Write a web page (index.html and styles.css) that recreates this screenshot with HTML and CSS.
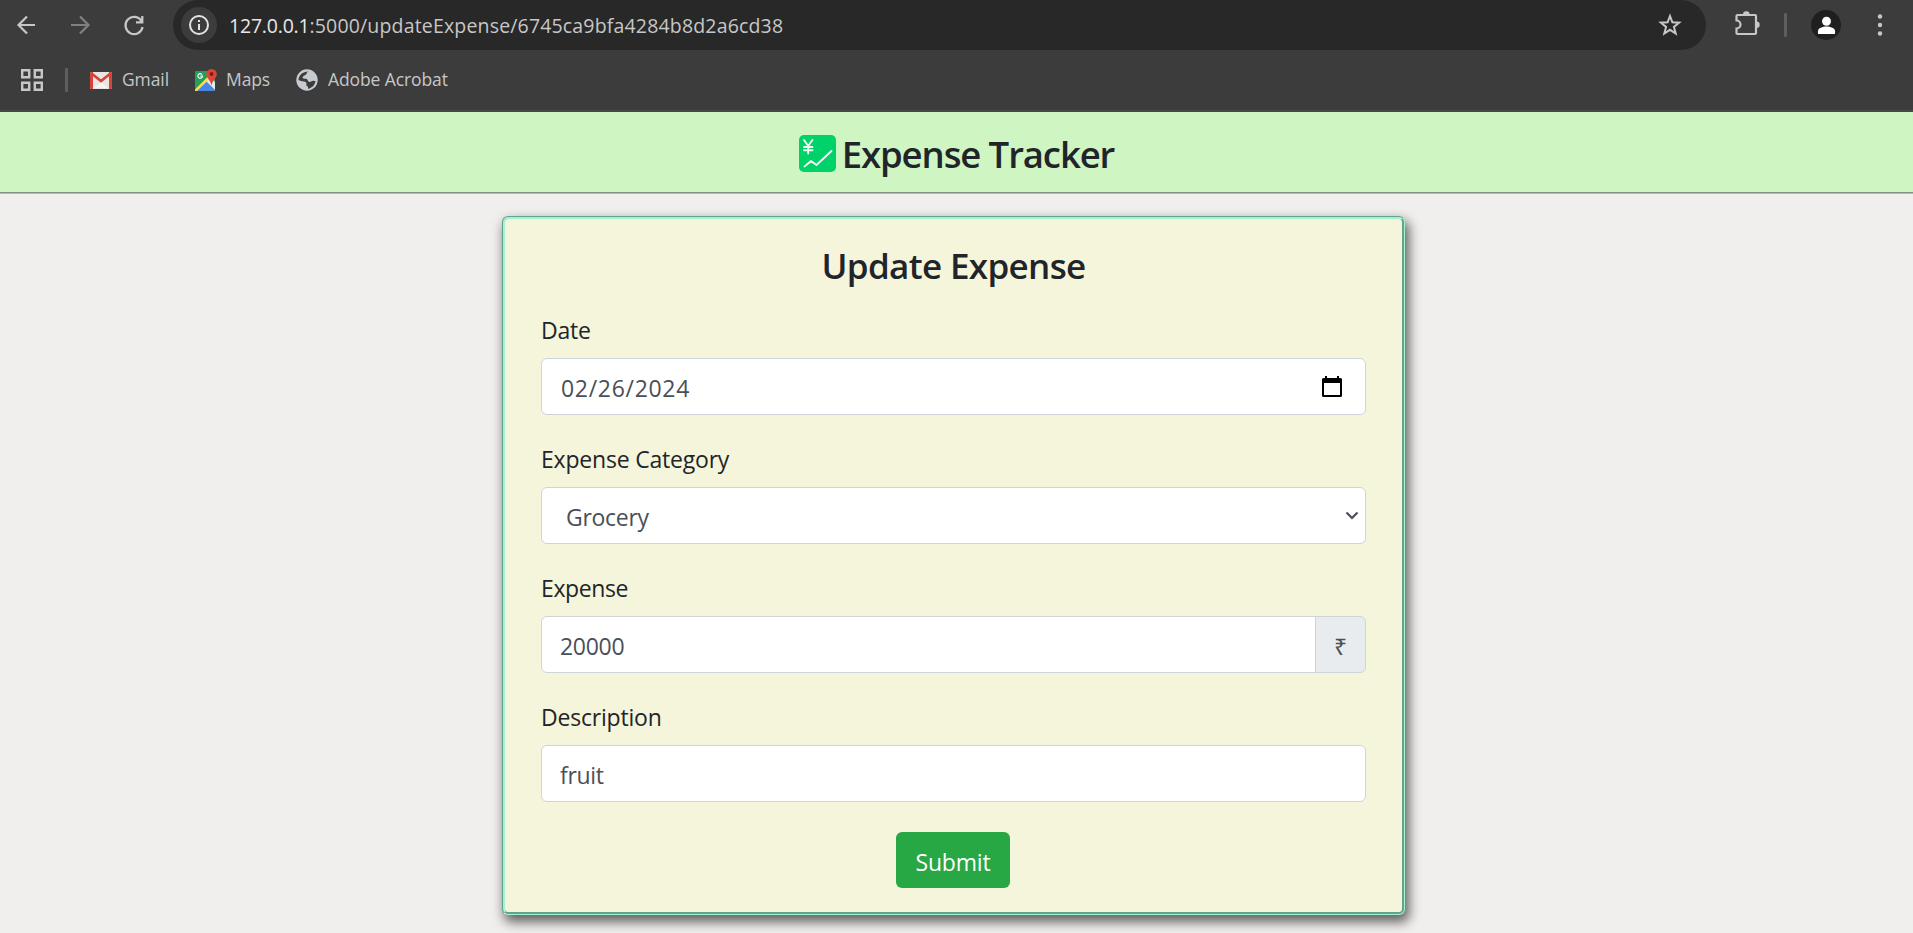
FILE: index.html
```html
<!DOCTYPE html>
<html lang="en">
<head>
<meta charset="utf-8">
<title>Expense Tracker</title>
<link rel="stylesheet" href="styles.css">
</head>
<body>
<div class="toolbar">
  <div class="nav-row">
    <svg class="nav-ico back" viewBox="0 0 24 24"><path d="M20 12H4M12 3.500L3.500 12l8.500 8.500"/></svg>
    <svg class="nav-ico forward" viewBox="0 0 24 24"><path d="M3 12H20M12 3.500L20.500 12L12 20.500"/></svg>
    <svg class="nav-ico reload" viewBox="0 0 24 24"><path d="M19.500 8A8.600 8.600 0 1 0 20.600 14M20.300 3v6.300H14"/></svg>
    <div class="omnibox">
      <span class="info"><svg viewBox="0 0 22 22"><circle cx="11" cy="11" r="9"/><path d="M11 10v6M11 6v2"/></svg></span>
      <span class="url"><b>127.0.0.1</b>:5000/updateExpense/6745ca9bfa4284b8d2a6cd38</span>
      <svg class="star" viewBox="0 0 24 24"><path d="M12 3l2.400 6.300 6.700.4-5.200 4.200 1.800 6.600L12 16.800l-5.700 3.700 1.800-6.600-5.200-4.200 6.700-.4z"/></svg>
    </div>
    <svg class="puzzle" viewBox="0 0 26 26"><path d="M3.500 4H21a1 1 0 0 1 1 1V22a1 1 0 0 1-1 1H3.500a1 1 0 0 1-1-1V17.500a4 4 0 0 0 0-8V5a1 1 0 0 1 1-1z"/><path class="knob" d="M9 3.500a3.300 3.300 0 0 1 6.600 0zM22.500 10.500a3.200 3.200 0 0 1 0 6.400z"/></svg>
    <span class="sep sep-top"></span>
    <span class="avatar"><svg viewBox="0 0 20 20"><circle cx="10" cy="5.500" r="4.700"/><path d="M1 19v-3c0-3.500 5-5 9-5s9 1.500 9 5v3z"/></svg></span>
    <svg class="dots" viewBox="0 0 6 22"><circle cx="3" cy="2.500" r="2.200"/><circle cx="3" cy="11" r="2.200"/><circle cx="3" cy="19.500" r="2.200"/></svg>
  </div>
  <div class="bookmarks">
    <svg class="apps" viewBox="0 0 22 22"><path d="M1.200 1.200h7v7h-7zM13.800 1.200h7v7h-7zM1.200 13.800h7v7h-7zM13.800 13.800h7v7h-7z"/></svg>
    <span class="sep sep-bm"></span>
    <svg class="gmail" viewBox="0 0 22 17"><rect width="22" height="17" rx="1.500" fill="#e8e6e3"/><path d="M4 16l7-6 7 6z" fill="#f7f5f3"/><path d="M0 1.500A1.500 1.500 0 0 1 1.500 0H3v17H1.500A1.500 1.500 0 0 1 0 15.500zM19 0h1.500A1.500 1.500 0 0 1 22 1.500v14a1.500 1.500 0 0 1-1.500 1.500H19z" fill="#d5443b"/><path d="M1.500 1.500L11 9l9.500-7.500" fill="none" stroke="#d5443b" stroke-width="2.800"/></svg>
    <span class="bm bm-gmail">Gmail</span>
    <svg class="maps" viewBox="0 0 22 22"><rect y="2" width="20" height="20" rx="1" fill="#24a05a"/><path d="M1 22L11 12l9 10z" fill="#4a86e8"/><path d="M11 12l4-4 5 5v8z" fill="#e8eaed"/><path d="M0 20.500L13.500 7l2 2L2 22H0z" fill="#fbdc50"/><path d="M16.500 0a5.300 5.300 0 0 0-5.300 5.300c0 3.700 4 5.200 5.300 11.200 1.300-6 5.300-7.500 5.300-11.200A5.300 5.300 0 0 0 16.500 0z" fill="#dc4639"/><circle cx="16.500" cy="5" r="2" fill="#7d2018"/><path d="M7 5.500A2.300 2.300 0 1 0 7.500 7H5.200" fill="none" stroke="#fff" stroke-width="1.100"/></svg>
    <span class="bm bm-maps">Maps</span>
    <svg class="globe" viewBox="0 0 22 22"><circle cx="11" cy="11" r="10.700" fill="#c7cacf"/><path d="M12.500 2.500c-2 .5-1.500 2-2.500 3C8.500 7 7 6.500 6.500 8.500c0 1.500 2 1 3.500 1.300 2 .4 1.500 2.700 3.200 3.200 1.500.4 2.500-1.500 4.300-1.200 1 .2 1.500.4 2 .2-.5 4-3.500 7.200-7.500 7.700v-2.200c-1.500 0-2-1-1.500-2.500.3-1.500-1-2.300-2.500-2.500-2-.3-4-.5-5.500-1.500.2-4.500 4-8.500 10-8.500z" fill="#3c3c3c"/><path d="M13 3.500c.5 2-1.500 3 0 4.300 1.300 1 2.500-.3 4 .7l1.500 1" fill="none" stroke="#c7cacf" stroke-width="2"/></svg>
    <span class="bm bm-adobe">Adobe Acrobat</span>
  </div>
</div>
<header class="banner">
  <svg class="logo" viewBox="0 0 37 37"><rect width="37" height="37" rx="5" fill="#00d26a"/><path d="M5 5l4.200 6 4.200-6M9.200 11v7.500M5 12h8.500M5 15.300h8.500M5.500 31.500L12 26l5.500 4L32.500 16" fill="none" stroke="#f4f4f4" stroke-width="1.900" stroke-linecap="round" stroke-linejoin="round"/></svg>
  <h1>Expense Tracker</h1>
</header>
<main class="page">
  <form class="card">
    <h2>Update Expense</h2>
    <div class="group">
      <label>Date</label>
      <div class="control date"><span>02/26/2024</span><svg class="cal" viewBox="0 0 20 22"><path d="M3 0h2v2h10V0h2v2h1.500A1.500 1.500 0 0 1 20 3.500v16a1.500 1.500 0 0 1-1.500 1.500h-17A1.500 1.500 0 0 1 0 19.500v-16A1.500 1.500 0 0 1 1.500 2H3zM2 7v12h16V7z"/></svg></div>
    </div>
    <div class="group">
      <label>Expense Category</label>
      <div class="control select"><span>Grocery</span><svg class="chev" viewBox="0 0 14 9"><path d="M1.500 1.500L7 7l5.500-5.500"/></svg></div>
    </div>
    <div class="group">
      <label class="tight">Expense</label>
      <div class="joined"><div class="control amount"><span>20000</span></div><span class="addon">₹</span></div>
    </div>
    <div class="group">
      <label>Description</label>
      <div class="control"><span>fruit</span></div>
    </div>
    <button class="submit" type="button">Submit</button>
  </form>
</main>
</body>
</html>
```
FILE: styles.css
```css
* { box-sizing: border-box; }
body {
  margin: 0;
  height: 933px;
  overflow: hidden;
  background: #f0efed;
  color: #212529;
  font-family: "Open Sans", "Noto Sans", sans-serif;
  font-size: 23px;
}
svg { display: block; flex: none; }

/* Browser toolbar */
.toolbar { height: 112px; background: #3c3c3c; border-bottom: 2px solid #474747; color: #c7c7c7; }
.nav-row { display: flex; align-items: center; height: 50px; padding-left: 15px; }
.nav-ico { width: 24px; height: 24px; fill: none; stroke: #c7c7c7; stroke-width: 2.2; }
.forward { margin-left: 29px; stroke: #808080; }
.reload { margin-left: 30px; }
.omnibox { display: flex; align-items: center; width: 1533px; height: 50px; margin-left: 27px; padding-left: 8px; background: #282828; border-radius: 25px; }
.info { display: flex; align-items: center; justify-content: center; width: 36px; height: 36px; border-radius: 50%; background: #3c3c3c; }
.info svg { width: 22px; height: 22px; fill: none; stroke: #e3e3e3; stroke-width: 2; }
.url { margin-left: 12px; font-size: 19.5px; line-height: 49px; letter-spacing: .17px; white-space: nowrap; }
.url b { font-weight: 400; letter-spacing: -.2px; color: #e8e8e8; }
.star { width: 24px; height: 24px; margin-left: auto; margin-right: 24px; fill: none; stroke: #c7c7c7; stroke-width: 2; }
.puzzle { width: 26px; height: 26px; margin-left: 28px; margin-top: -3px; fill: none; stroke: #c7c7c7; stroke-width: 2.2; }
.knob { fill: #c7c7c7; stroke: none; }
.sep { width: 3px; height: 24px; background: #5e5e5e; border-radius: 1px; }
.sep-top { margin-left: 24px; }
.avatar { display: flex; align-items: center; justify-content: center; width: 30px; height: 30px; margin-left: 24px; background: #1f1f1f; border-radius: 50%; }
.avatar svg { width: 19px; height: 19px; fill: #fff; }
.dots { width: 6px; height: 22px; margin-left: 36px; fill: #c7c7c7; }
.bookmarks { display: flex; align-items: center; height: 60px; padding-left: 21px; }
.apps { width: 22px; height: 22px; fill: none; stroke: #c7c7c7; stroke-width: 2.4; }
.sep-bm { margin-left: 22px; }
.gmail { width: 22px; height: 17px; margin-left: 22px; }
.bm { padding-bottom: 2px; font-size: 17.5px; line-height: 24px; letter-spacing: -.1px; white-space: nowrap; }
.bm-gmail { width: 46px; margin-left: 10px; }
.maps { width: 22px; height: 22px; margin-left: 27px; }
.bm-maps { width: 44px; margin-left: 9px; }
.globe { width: 22px; height: 22px; margin-left: 26px; }
.bm-adobe { margin-left: 10px; }

/* Title banner */
.banner { display: flex; align-items: center; justify-content: center; height: 80px; background: #cff5c3; box-shadow: 0 1px 0 #858f82, 0 2px 0 #bcb7b7; }
.logo { width: 37px; height: 37px; margin-right: 6px; margin-top: 3px; }
h1, h2 { margin: 0; font-weight: 600; white-space: nowrap; }
h1 { padding-top: 4px; font-size: 36.5px; line-height: 44px; letter-spacing: -1.1px; }

/* Form card */
.page { padding: 24px 0 0 502px; }
.card {
  width: 903px;
  height: 699px;
  padding: 25px 36px 0;
  background: #f5f5dc;
  border: 3px groove #9ff5d3;
  border-radius: 6px;
  box-shadow: 3px 6px 12px 1px rgba(0, 0, 0, .6);
}
h2 { font-size: 35px; line-height: 43px; letter-spacing: -.65px; text-align: center; }
.group { height: 129px; }
.group label { display: block; line-height: 34px; letter-spacing: -.2px; }
.group .tight { letter-spacing: -.4px; }
h2 + .group { margin-top: 26px; }
.control { display: flex; align-items: center; height: 57px; margin-top: 11px; padding: 0 18px; background: #fff; border: 1px solid #ced4da; border-radius: 6px; color: #495057; letter-spacing: -.3px; }
.control span { padding-top: 3px; }
.date { padding: 0 23px 0 19px; justify-content: space-between; letter-spacing: .7px; }
.cal { width: 20px; height: 22px; }
.select { padding: 0 6px 0 24px; justify-content: space-between; }
.chev { width: 14px; height: 9px; fill: none; stroke: #495057; stroke-width: 2.2; }
.joined { display: flex; margin-top: 11px; }
.amount { flex: 1; margin-top: 0; border-radius: 6px 0 0 6px; }
.addon { display: flex; align-items: center; justify-content: center; width: 51px; height: 57px; margin-left: -1px; padding-top: 3px; background: #e9ecef; border: 1px solid #ced4da; border-radius: 0 6px 6px 0; color: #495057; }
.submit { display: block; width: 114px; height: 56px; margin: 3px 0 0 355px; padding: 3px 0 0; border: 0; border-radius: 6px; background: #28a745; color: #fff; font: inherit; letter-spacing: -.2px; }
```
